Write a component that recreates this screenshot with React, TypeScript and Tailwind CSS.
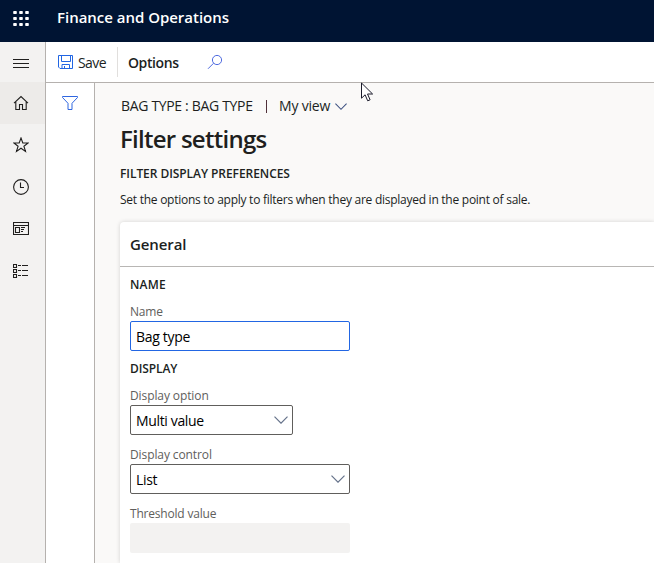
import React from "react";

const dots = [0, 6, 12];

function Chevron({ className }: { className: string }) {
  return (
    <svg className={className} width="14" height="8" viewBox="0 0 14 8" fill="none" stroke="currentColor" strokeWidth="1.2">
      <path d="M.5 .7 7 7.2 13.5 .7" />
    </svg>
  );
}

function Waffle() {
  return (
    <svg width="16" height="15" viewBox="0 0 16 15" fill="#fff">
      {dots.map((y) => dots.map((x) => <rect key={`${x}-${y}`} x={x + 0.2} y={y} width="3.6" height="3" rx="0.8" />))}
    </svg>
  );
}

function Cursor() {
  return (
    <svg className="absolute left-[361px] top-[82px]" width="13" height="20" viewBox="0 0 13 20">
      <path d="M.5 1v15.2l3.6-3.4 2.6 6 2.4-1-2.6-5.8h5.1z" fill="#fff" stroke="#1b1b2b" />
    </svg>
  );
}

function NavItem({ active, children }: { active?: boolean; children: React.ReactNode }) {
  return (
    <div className={`flex h-[42px] items-center pl-[13px] ${active ? "bg-[#edebe9]" : ""}`}>
      <svg width="16" height="16" viewBox="0 0 16 16" fill="none" stroke="#201f1e" strokeWidth="1.1">
        {children}
      </svg>
    </div>
  );
}

function Label({ children, className }: { children: React.ReactNode; className: string }) {
  return <div className={`h-4 text-[12px] font-medium leading-4 text-[#605e5c] ${className}`}>{children}</div>;
}

export default function App() {
  return (
    <div className="relative flex h-[563px] w-[654px] flex-col overflow-hidden whitespace-nowrap bg-white font-['Open_Sans','Noto_Sans',sans-serif] text-[#201f1e]">
      <header className="flex h-[42px] shrink-0 items-start bg-[#001433] pl-[13px] pt-[11px]">
        <Waffle />
        <div className="-mt-1 ml-7 text-[15px] font-semibold leading-5 text-white"><span className="tracking-[-0.02px]">Finance and Operations</span></div>
      </header>
      <div className="flex min-h-0 flex-1">
        <nav className="w-[46px] shrink-0 border-r border-[#b5b1ae] bg-[#f3f2f1]">
          <div className="flex h-10 items-center pl-[13px] pt-[3px]">
            <svg width="16" height="10" viewBox="0 0 16 10" stroke="#201f1e"><path d="M0 .5h16M0 4.5h16M0 8.5h16" /></svg>
          </div>
          <NavItem active><path d="M1 8.2 8 1.5l7 6.7M2.8 6.8v7.7h3.7v-5h3v5h3.7V6.8" /></NavItem>
          <NavItem><path d="m8 1 1.8 5h5.3l-4.2 3.2 1.6 5.2L8 11.2l-4.5 3.2 1.6-5.2L.9 6h5.3z" /></NavItem>
          <NavItem><circle cx="8" cy="8" r="7.4" /><path d="M7.5 3.5v5H11" /></NavItem>
          <NavItem><path d="M.5 1.5h15v12H.5zM.5 4.5h15M2.5 6.5h4v5h-4zM8 6.5h4M8 8.5h3M8 10.5h2" /></NavItem>
          <NavItem><path d="M.5 1.5h3v3h-3zM.5 6.5h3v3h-3zM.5 11.5h3v3h-3zM5 2.5h3M9 2.5h6M5 7.5h3M9 7.5h6M5 12.5h3M9 12.5h6" /></NavItem>
        </nav>
        <div className="flex min-w-0 flex-1 flex-col">
          <div className="flex h-[41px] shrink-0 items-center border-b border-[#b5b1ae] pl-3">
            <svg className="shrink-0" width="16" height="16" viewBox="0 0 16 16" fill="none" stroke="#2266e3">
              <path d="M.5 1.5h14v13H2l-1.5-1.5zM3.5 1.5v6h9v-6M4 14.5v-4h7.5v4M6.5 12v2.5" />
            </svg>
            <div className="ml-1 w-[39px] pt-0.5 text-[14px] leading-5"><span className="tracking-[-0.6px]">Save</span></div>
            <div className="h-[30px] w-px bg-[#e1dfdd]" />
            <div className="ml-[10px] w-[79px] pt-0.5 text-[14px] font-semibold leading-5"><span className="tracking-[-0.4px]">Options</span></div>
            <svg width="16" height="16" viewBox="0 0 16 16" fill="none" stroke="#4f6be0">
              <circle cx="10" cy="6" r="4.6" /><path d="M6.6 9.2 1 14.8" />
            </svg>
          </div>
          <div className="flex min-h-0 flex-1">
            <aside className="w-[49px] shrink-0 border-r border-[#b5b1ae] pl-4 pt-3">
              <svg width="16" height="16" viewBox="0 0 16 16" fill="none" stroke="#2f66e0">
                <path d="M.5 1.5h15v1L10 8.3v6.2H6V8.3L.5 2.5z" />
              </svg>
            </aside>
            <main className="flex min-w-0 flex-1 flex-col bg-[#faf9f8] pl-[25px] pt-[13px]">
              <div className="flex h-5 shrink-0 items-center text-[14px] leading-5">
                <div className="ml-px w-[145px]"><span className="tracking-[-0.33px]">BAG TYPE : BAG TYPE</span></div>
                <div className="h-[13px] w-px bg-[#50303a]" />
                <div className="ml-3 w-[56px]"><span className="tracking-[-0.2px]">My view</span></div>
                <Chevron className="h-[7px] w-3 text-[#3b4f80]" />
              </div>
              <h1 className="mt-[7px] h-8 shrink-0 text-[24px] font-semibold leading-8"><span className="tracking-[-0.74px]">Filter settings</span></h1>
              <h2 className="mt-[11px] h-4 shrink-0 text-[12px] font-semibold leading-4"><span className="tracking-[-0.06px]">FILTER DISPLAY PREFERENCES</span></h2>
              <p className="mt-[10px] h-4 shrink-0 text-[12px] leading-4"><span className="tracking-[-0.26px]">Set the options to apply to filters when they are displayed in the point of sale.</span></p>
              <section className="mt-[14px] flex-1 rounded-tl-sm bg-white shadow-[0_0_4px_rgba(0,0,0,0.16)]">
                <div className="flex h-[45px] items-center border-b border-[#b8b6b4] pl-[10px] text-[15px] font-semibold leading-5"><span className="tracking-[-0.1px]">General</span></div>
                <div className="w-[230px] pl-[10px]">
                  <h3 className="mt-[10px] h-4 text-[12px] font-semibold leading-4"><span className="tracking-[0.2px]">NAME</span></h3>
                  <Label className="mt-[11px]"><span className="tracking-[-0.2px]">Name</span></Label>
                  <div className="mt-px flex h-[30px] items-center rounded-[2px] border border-[#2266e3] pl-[5px] text-[14px] text-black"><span className="tracking-[-0.3px]">Bag type</span></div>
                  <h3 className="mt-[10px] h-4 text-[12px] font-semibold leading-4"><span className="tracking-[-0.1px]">DISPLAY</span></h3>
                  <Label className="mt-[11px]"><span className="tracking-[-0.1px]">Display option</span></Label>
                  <div className="mt-px flex h-[30px] w-[163px] items-center justify-between rounded-[2px] border border-[#605e5c] pl-[5px] pr-1 text-[14px] text-black"><span className="tracking-[-0.35px]">Multi value</span><Chevron className="text-[#65728a]" /></div>
                  <Label className="mt-3"><span className="tracking-[-0.1px]">Display control</span></Label>
                  <div className="mt-px flex h-[30px] items-center justify-between rounded-[2px] border border-[#605e5c] pl-[5px] pr-1 text-[14px] text-black"><span className="tracking-[-0.3px]">List</span><Chevron className="text-[#65728a]" /></div>
                  <Label className="mt-3"><span className="tracking-[-0.2px]">Threshold value</span></Label>
                  <div className="mt-px h-[30px] rounded-[2px] bg-[#f3f2f1]" />
                </div>
              </section>
            </main>
          </div>
        </div>
      </div>
      <Cursor />
    </div>
  );
}
